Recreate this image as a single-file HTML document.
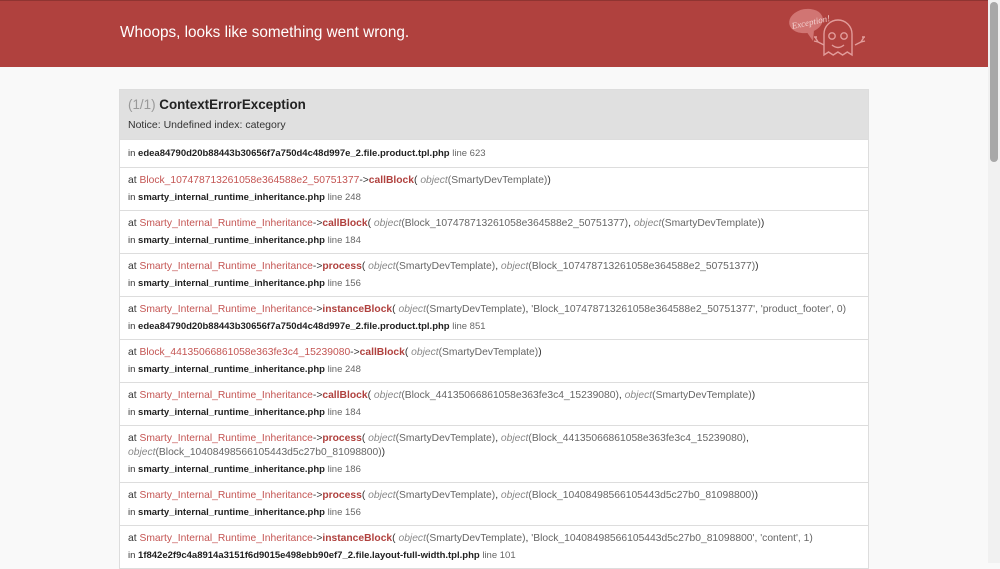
<!DOCTYPE html>
<html><head><meta charset="utf-8"><style>
body{margin:0;background:#f9f9f9;font-family:"Liberation Sans",Arial,sans-serif;color:#333;width:1000px;height:563px;overflow:hidden;position:relative}
.hd{position:absolute;left:0;top:0;width:988px;height:67px;background:#b0413e;border-top:1px solid #8f3431;box-sizing:border-box}
.hd h1{margin:0;position:absolute;left:120px;top:23px;font-size:15.3px;font-weight:normal;color:#fff}
.sb{position:absolute;right:0;top:0;width:12px;height:563px;background:#f1f1f1}
.sb div{position:absolute;left:2px;top:2px;width:8px;height:160px;background:#a8a8a8;border-radius:4px}
.box{position:absolute;left:119px;top:89px;width:750px;box-sizing:border-box;border:1px solid #ddd;background:#fff}
.bh{background:#e0e0e0;padding:6px 8px 5px;height:38px}
.bh .t{font-size:13.4px;font-weight:bold;line-height:18px;color:#222}
.bh .t span{color:#999;font-weight:normal}
.bh .n{font-size:10.5px;line-height:14px;margin-top:4px;color:#333}
.r{border-top:1px solid #ddd;padding:6px 8px 5px;font-size:10.3px;line-height:14px}
.r *{line-height:14px}
.r .a{height:14px;color:#333;white-space:nowrap}
.r .a.d{height:28px;white-space:normal}
.r .i{height:14px;margin-top:3px;font-size:9.5px;white-space:nowrap}
.r.f{padding:7px 8px 6px}.r.f .i{margin-top:0}
.c{color:#c45553}.m{color:#b0413e;font-weight:bold}.o{color:#888;font-style:italic}.g{color:#666}
b{color:#222}
</style></head><body>
<div class="hd"><h1>Whoops, looks like something went wrong.</h1>
<svg style="position:absolute;left:786px;top:4px" width="86" height="56" viewBox="0 0 86 56" fill="none" stroke="#e29c9a" stroke-width="1.4">
<ellipse cx="20" cy="16" rx="17" ry="12" fill="#d17573" stroke="none" transform="rotate(-10 20 16)"/><path d="M20 26 L27 36 L28 25" fill="#d17573" stroke="none"/>
<text x="5" y="21" font-size="9" fill="#f3d0cf" stroke="none" font-style="italic" font-family="Liberation Serif" transform="rotate(-12 20 16)">Exception!</text>
<path d="M38 50 V29 a14 14 0 0 1 28 0 V50 l-4.7 -3 l-4.7 3 l-4.7 -3 l-4.7 3 l-4.7 -3 z"/>
<circle cx="46" cy="31" r="3.2"/><circle cx="58" cy="31" r="3.2"/><path d="M46 40 q6 5 12 0"/>
<path d="M38 40 l-6 -3 l-3 -5 m3 5 l-4 -1 m0 -4 l3 0 m38 8 l6 -3 l3 -5 m-3 5 l4 -1 m0 -4 l-3 0"/>
</svg></div>
<div class="sb"><div></div></div>
<div class="box">
<div class="bh"><div class="t"><span>(1/1)</span> ContextErrorException</div><div class="n">Notice: Undefined index: category</div></div>
<div class="r f"><div class="i">in <b>edea84790d20b88443b30656f7a750d4c48d997e_2.file.product.tpl.php</b> <span class="g">line 623</span></div></div>
<div class="r"><div class="a">at <span class="c">Block_107478713261058e364588e2_50751377</span>-&gt;<span class="m">callBlock</span>( <span class="o">object</span><span class="g">(SmartyDevTemplate)</span>)</div><div class="i">in <b>smarty_internal_runtime_inheritance.php</b> <span class="g">line 248</span></div></div>
<div class="r"><div class="a">at <span class="c">Smarty_Internal_Runtime_Inheritance</span>-&gt;<span class="m">callBlock</span>( <span class="o">object</span><span class="g">(Block_107478713261058e364588e2_50751377)</span>, <span class="o">object</span><span class="g">(SmartyDevTemplate)</span>)</div><div class="i">in <b>smarty_internal_runtime_inheritance.php</b> <span class="g">line 184</span></div></div>
<div class="r"><div class="a">at <span class="c">Smarty_Internal_Runtime_Inheritance</span>-&gt;<span class="m">process</span>( <span class="o">object</span><span class="g">(SmartyDevTemplate)</span>, <span class="o">object</span><span class="g">(Block_107478713261058e364588e2_50751377)</span>)</div><div class="i">in <b>smarty_internal_runtime_inheritance.php</b> <span class="g">line 156</span></div></div>
<div class="r"><div class="a">at <span class="c">Smarty_Internal_Runtime_Inheritance</span>-&gt;<span class="m">instanceBlock</span>( <span class="o">object</span><span class="g">(SmartyDevTemplate)</span>, <span class="g">'Block_107478713261058e364588e2_50751377', 'product_footer', 0)</span></div><div class="i">in <b>edea84790d20b88443b30656f7a750d4c48d997e_2.file.product.tpl.php</b> <span class="g">line 851</span></div></div>
<div class="r"><div class="a">at <span class="c">Block_44135066861058e363fe3c4_15239080</span>-&gt;<span class="m">callBlock</span>( <span class="o">object</span><span class="g">(SmartyDevTemplate)</span>)</div><div class="i">in <b>smarty_internal_runtime_inheritance.php</b> <span class="g">line 248</span></div></div>
<div class="r"><div class="a">at <span class="c">Smarty_Internal_Runtime_Inheritance</span>-&gt;<span class="m">callBlock</span>( <span class="o">object</span><span class="g">(Block_44135066861058e363fe3c4_15239080)</span>, <span class="o">object</span><span class="g">(SmartyDevTemplate)</span>)</div><div class="i">in <b>smarty_internal_runtime_inheritance.php</b> <span class="g">line 184</span></div></div>
<div class="r"><div class="a d">at <span class="c">Smarty_Internal_Runtime_Inheritance</span>-&gt;<span class="m">process</span>( <span class="o">object</span><span class="g">(SmartyDevTemplate)</span>, <span class="o">object</span><span class="g">(Block_44135066861058e363fe3c4_15239080)</span>,<br><span class="o">object</span><span class="g">(Block_10408498566105443d5c27b0_81098800)</span>)</div><div class="i">in <b>smarty_internal_runtime_inheritance.php</b> <span class="g">line 186</span></div></div>
<div class="r"><div class="a">at <span class="c">Smarty_Internal_Runtime_Inheritance</span>-&gt;<span class="m">process</span>( <span class="o">object</span><span class="g">(SmartyDevTemplate)</span>, <span class="o">object</span><span class="g">(Block_10408498566105443d5c27b0_81098800)</span>)</div><div class="i">in <b>smarty_internal_runtime_inheritance.php</b> <span class="g">line 156</span></div></div>
<div class="r"><div class="a">at <span class="c">Smarty_Internal_Runtime_Inheritance</span>-&gt;<span class="m">instanceBlock</span>( <span class="o">object</span><span class="g">(SmartyDevTemplate)</span>, <span class="g">'Block_10408498566105443d5c27b0_81098800', 'content', 1)</span></div><div class="i">in <b>1f842e2f9c4a8914a3151f6d9015e498ebb90ef7_2.file.layout-full-width.tpl.php</b> <span class="g">line 101</span></div></div>
</div>
</body></html>
